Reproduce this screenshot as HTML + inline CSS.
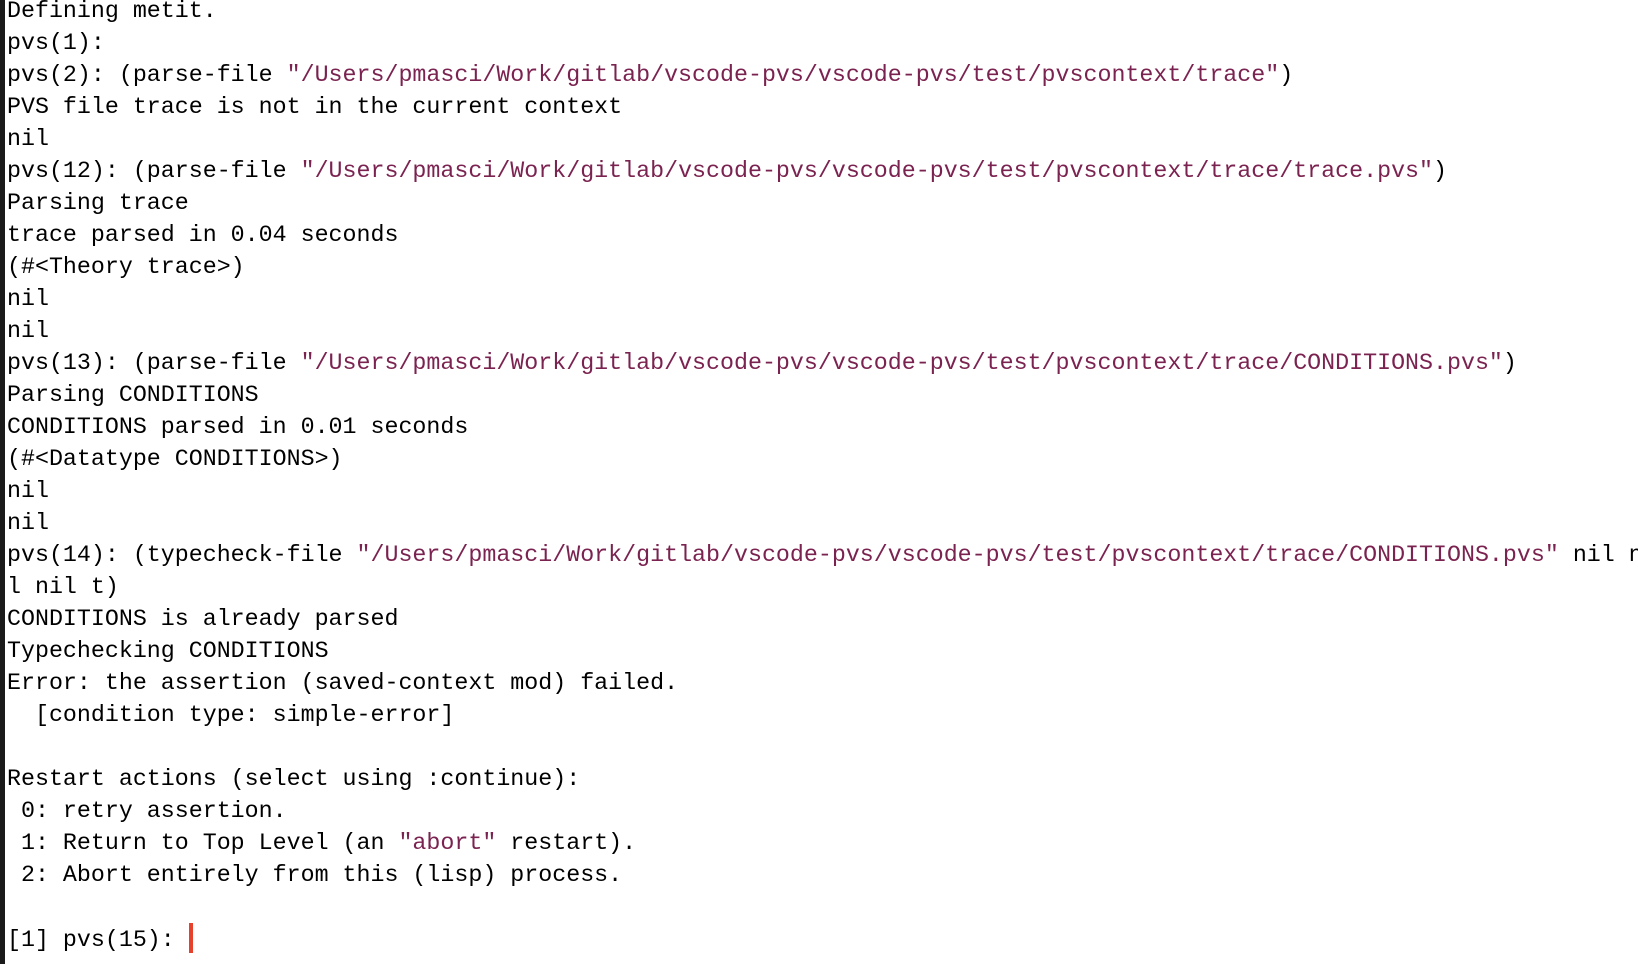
<!DOCTYPE html>
<html><head><meta charset="utf-8"><style>
html,body{margin:0;padding:0;background:#fff;width:1638px;height:964px;overflow:hidden;}
.bar{position:absolute;left:0;top:0;width:5px;height:964px;background:#1a1a1a;}
pre{position:absolute;left:7px;top:-5px;margin:0;font-family:"Liberation Mono",monospace;font-size:23.3px;line-height:32px;color:#000;white-space:pre;width:1631px;overflow:hidden;}
.s{color:#7b2350;}
.cur{display:inline-block;width:4px;height:30px;background:#e8412b;vertical-align:-7px;}
</style></head><body>
<div class="bar"></div>
<pre>Defining metit.
pvs(1):
pvs(2): (parse-file <span class="s">"/Users/pmasci/Work/gitlab/vscode-pvs/vscode-pvs/test/pvscontext/trace"</span>)
PVS file trace is not in the current context
nil
pvs(12): (parse-file <span class="s">"/Users/pmasci/Work/gitlab/vscode-pvs/vscode-pvs/test/pvscontext/trace/trace.pvs"</span>)
Parsing trace
trace parsed in 0.04 seconds
(#&lt;Theory trace&gt;)
nil
nil
pvs(13): (parse-file <span class="s">"/Users/pmasci/Work/gitlab/vscode-pvs/vscode-pvs/test/pvscontext/trace/CONDITIONS.pvs"</span>)
Parsing CONDITIONS
CONDITIONS parsed in 0.01 seconds
(#&lt;Datatype CONDITIONS&gt;)
nil
nil
pvs(14): (typecheck-file <span class="s">"/Users/pmasci/Work/gitlab/vscode-pvs/vscode-pvs/test/pvscontext/trace/CONDITIONS.pvs"</span> nil ni
l nil t)
CONDITIONS is already parsed
Typechecking CONDITIONS
Error: the assertion (saved-context mod) failed.
  [condition type: simple-error]

Restart actions (select using :continue):
 0: retry assertion.
 1: Return to Top Level (an <span class="s">"abort"</span> restart).
 2: Abort entirely from this (lisp) process.

[1] pvs(15): <span class="cur"></span></pre>
</body></html>
